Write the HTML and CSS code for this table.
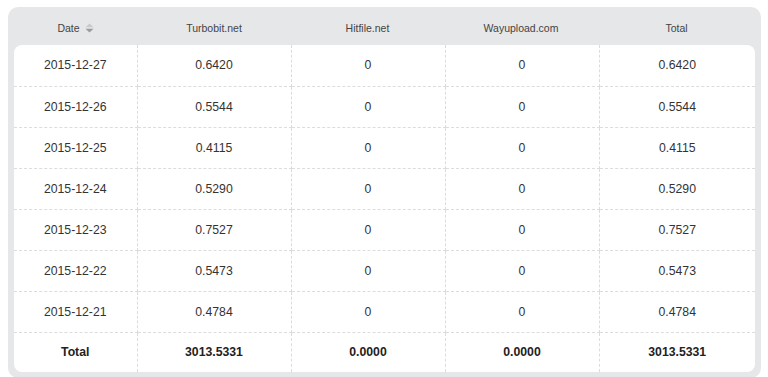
FILE: index.html
```html
<!DOCTYPE html>
<html lang="en">
<head>
    <meta charset="UTF-8">
    <title>Earnings by Day</title>
    <link rel="stylesheet" href="styles.css">
</head>
<body>
    <div class="stats-panel">
        <div class="stats-head">
            <div class="head-cell">Date
                <svg class="sort-icon" width="9" height="10" viewBox="0 0 9 10">
                    <path d="M4.5 0.5 L8.5 4.3 L0.5 4.3 Z" fill="#c8c9cb"/>
                    <path d="M0.5 5.7 L8.5 5.7 L4.5 9.5 Z" fill="#9a9b9d"/>
                </svg>
            </div>
            <div class="head-cell">Turbobit.net</div>
            <div class="head-cell">Hitfile.net</div>
            <div class="head-cell">Wayupload.com</div>
            <div class="head-cell">Total</div>
        </div>

        <div class="stats-body">
            <table class="stats-table">
                <colgroup>
                    <col class="col-date">
                    <col class="col-site">
                    <col class="col-site">
                    <col class="col-site">
                    <col>
                </colgroup>
                <tbody>
                    <tr><td>2015-12-27</td><td>0.6420</td><td>0</td><td>0</td><td>0.6420</td></tr>
                    <tr><td>2015-12-26</td><td>0.5544</td><td>0</td><td>0</td><td>0.5544</td></tr>
                    <tr><td>2015-12-25</td><td>0.4115</td><td>0</td><td>0</td><td>0.4115</td></tr>
                    <tr><td>2015-12-24</td><td>0.5290</td><td>0</td><td>0</td><td>0.5290</td></tr>
                    <tr><td>2015-12-23</td><td>0.7527</td><td>0</td><td>0</td><td>0.7527</td></tr>
                    <tr><td>2015-12-22</td><td>0.5473</td><td>0</td><td>0</td><td>0.5473</td></tr>
                    <tr><td>2015-12-21</td><td>0.4784</td><td>0</td><td>0</td><td>0.4784</td></tr>
                    <tr class="total-row"><td>Total</td><td>3013.5331</td><td>0.0000</td><td>0.0000</td><td>3013.5331</td></tr>
                </tbody>
            </table>
        </div>
    </div>
</body>
</html>
```

FILE: styles.css
```css
* {
    margin: 0;
    padding: 0;
    box-sizing: border-box;
}

body {
    background: #fff;
    font-family: 'Liberation Sans', Arial, sans-serif;
    color: #333;
    padding: 7px 7px 0 8px;
}

/* Panel */
.stats-panel {
    background: #e6e7e9;
    border-radius: 10px;
    padding: 0 6px 6px;
}

/* Header */
.stats-head {
    display: grid;
    grid-template-columns: 123px 154px 153px 154px 1fr;
    height: 38px;
    align-items: center;
}

.head-cell {
    text-align: center;
    font-size: 10.5px;
    color: #444;
    padding-top: 4px;
}

.sort-icon {
    vertical-align: -1px;
    margin-left: 2px;
}

/* Body */
.stats-body {
    background: #fff;
    border-radius: 8px;
    overflow: hidden;
}

.stats-table {
    width: 100%;
    border-collapse: collapse;
    table-layout: fixed;
}

.col-date {
    width: 123px;
}

.col-site {
    width: 154px;
}

.stats-table td {
    height: 41px;
    text-align: center;
    font-size: 12.25px;
    color: #333;
    border-right: 1px dashed #dcdcdc;
    border-bottom: 1px dashed #dcdcdc;
}

.stats-table td:last-child {
    border-right: none;
}

.stats-table tr:last-child td {
    border-bottom: none;
    height: 40px;
}

.total-row td {
    font-weight: bold;
    color: #222;
}
```
